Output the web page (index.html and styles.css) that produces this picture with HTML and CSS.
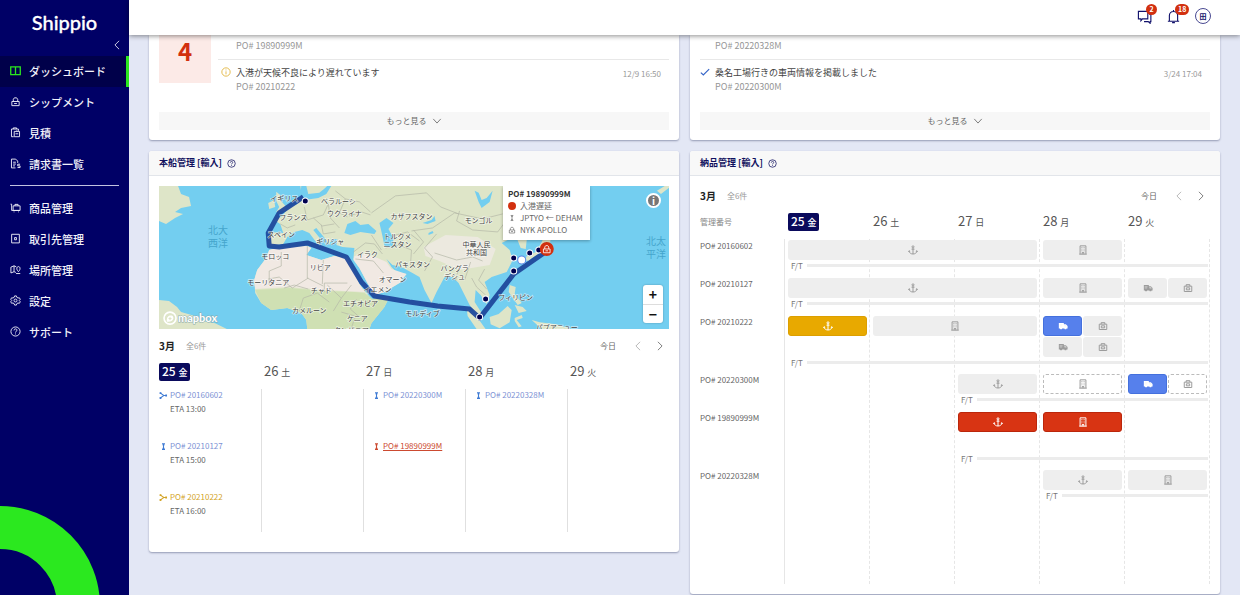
FILE: index.html
```html
<!DOCTYPE html>
<html lang="ja">
<head>
    <meta charset="UTF-8">
    <meta name="viewport" content="width=device-width, initial-scale=1.0">
    <title>Shippio - ダッシュボード</title>
    <link rel="stylesheet" href="styles.css">
</head>
<body>

    <!-- icon sprite -->
    <svg class="sprite" aria-hidden="true">
        <symbol id="i-board" viewBox="0 0 12 12"><path d="M.8 2h10.4v8.4H.8zM6 2v8.4"/></symbol>
        <symbol id="i-ship" viewBox="0 0 12 12"><path d="M2 6h8v4.500H2zM3.600 6V3.600L4.800 2h2.400l1.200 1.600V6M4.500 8.200h3"/></symbol>
        <symbol id="i-quote" viewBox="0 0 12 12"><path d="M4 10.6H1.6V2.2h7.6v2M3.6 2.2V1h3.6v1.2M4.6 4.8h5.8v5.8H4.6zM6 7.4h3M7.5 4.8V3.6"/></symbol>
        <symbol id="i-bill" viewBox="0 0 12 12"><path d="M6 10.8H1.6V1.2h4.6l2.2 2.2v2M3.4 4.6h3M3.4 6.6h3M3.4 8.6h2M11 6.8H8.4v1.8H11v1.8H8.2"/></symbol>
        <symbol id="i-goods" viewBox="0 0 12 12"><path d="M.6 2.4h1.2v6.8h8.8M3.4 4.2h7.6v5H3.4zM5.4 4.2V2.6h3.4v1.6M4 10.8h.8M9 10.8h.8"/></symbol>
        <symbol id="i-partner" viewBox="0 0 12 12"><path d="M1.8 1.4h8.4v9.4H1.8zM5 5h2v2.400H5z"/></symbol>
        <symbol id="i-place" viewBox="0 0 12 12"><path d="M6.4 9.2L4.4 8.4 1 9.8V3.4L4.4 2v6.4M4.4 2l2.4 1M9.2 8.4c-3-3-1.6-5.6 0-5.6s3 2.6 0 5.6zM6.6 10.4h4.6"/></symbol>
        <symbol id="i-gear" viewBox="0 0 12 12"><path d="M5 1h2l.4 1.5 1.4.8L10.2 3l1 1.7L10.100 6l1.100 1.400-1 1.700-1.500-.400-1.300.800L7 11H5l-.400-1.500-1.400-.800-1.400.400-1-1.700L1.900 6 .8 4.700l1-1.700 1.400.300 1.400-.800z"/><circle cx="6" cy="6" r="1.600"/></symbol>
        <symbol id="i-help" viewBox="0 0 12 12"><circle cx="6" cy="6" r="5"/><path d="M4.400 4.800c0-2.200 3.200-2.200 3.200-.2C7.600 5.800 6 5.800 6 7.200M6 8.200v1"/></symbol>
        <symbol id="i-info" viewBox="0 0 12 12"><circle cx="6" cy="6" r="5"/><path d="M6 5.200v3.600M6 3v1.100"/></symbol>
        <symbol id="i-check" viewBox="0 0 12 12"><path d="M1 6.800l3 2.800L11 2.600"/></symbol>
        <symbol id="i-left" viewBox="0 0 12 12"><path d="M8.500 1L3.500 6l5 5"/></symbol>
        <symbol id="i-right" viewBox="0 0 12 12"><path d="M3.500 1l5 5-5 5"/></symbol>
        <symbol id="i-down" viewBox="0 0 12 12"><path d="M1.500 3.500L6 8.500l4.500-5"/></symbol>
        <symbol id="i-chat" viewBox="0 0 16 16"><path d="M1.500 2.500h10v8H5.800l-1.600 2v-2H1.500zM13 5.500h1.800v8H14v1.800l-2-1.800H7.500"/></symbol>
        <symbol id="i-bell" viewBox="0 0 16 16"><path d="M2 13h12M3.600 13V7a4.400 4.400 0 0 1 8.800 0v6M6.500 14.500h3M8 2.500V1"/></symbol>
        <symbol id="i-direct" viewBox="0 0 12 12"><path d="M4 2.200h4M4 9.800h4M6 2v8M4.800 3.800h2.400M4.800 8.200h2.400"/></symbol>
        <symbol id="i-trans" viewBox="0 0 12 12"><path d="M1.500 2.500L6.500 6l-5 3.500M6 6h4"/><path class="solid" d="M.8 1.500h2.400v2.400H.8zM.8 8.100h2.400v2.400H.8zM8.300 4.800h2.400v2.400H8.300z"/></symbol>
        <symbol id="i-anchor" viewBox="0 0 12 12"><circle cx="6" cy="2.200" r="1.200"/><path d="M6 3.400v7.400M4.200 5h3.600M1.200 7.200c.4 2.400 2.400 3.600 4.800 3.600s4.400-1.200 4.800-3.600M.8 8.400l.5-1.600 1.300 1M11.200 8.400l-.5-1.600-1.300 1"/></symbol>
        <symbol id="i-building" viewBox="0 0 12 12"><path d="M2.500 11V1h7v10M1.500 11h9M5 11V9h2v2M4.200 3h1M6.800 3h1M4.200 5h1M6.800 5h1M4.200 7h1M6.800 7h1"/></symbol>
        <symbol id="i-truck" viewBox="0 0 12 12"><path class="solid" d="M1 2.500h6v1.500h2.400L11.500 6v3h-1.200a1.400 1.400 0 0 1-2.700 0H5a1.400 1.400 0 0 1-2.700 0H1z"/><path class="gap" d="M2 4.500h3.500M2 6h3M8 5.200h1.200l.9 1H8z"/></symbol>
        <symbol id="i-box" viewBox="0 0 12 12"><path d="M1.500 3.800h9v6.400h-9zM3.800 3.800V2h4.400v1.800M4 5.800h4v2.400H4z"/></symbol>
    </svg>

    <nav class="sidebar">
        <div class="brand">
            <a href="#" class="logo">Shippio</a>
            <button class="collapse" aria-label="メニューを閉じる"><svg class="icon"><use href="#i-left"/></svg></button>
        </div>
        <ul class="menu">
            <li><a href="#" class="active"><svg class="icon"><use href="#i-board"/></svg>ダッシュボード</a></li>
            <li><a href="#"><svg class="icon"><use href="#i-ship"/></svg>シップメント</a></li>
            <li><a href="#"><svg class="icon"><use href="#i-quote"/></svg>見積</a></li>
            <li><a href="#"><svg class="icon"><use href="#i-bill"/></svg>請求書一覧</a></li>
        </ul>
        <hr class="divider">
        <ul class="menu">
            <li><a href="#"><svg class="icon"><use href="#i-goods"/></svg>商品管理</a></li>
            <li><a href="#"><svg class="icon"><use href="#i-partner"/></svg>取引先管理</a></li>
            <li><a href="#"><svg class="icon"><use href="#i-place"/></svg>場所管理</a></li>
            <li><a href="#"><svg class="icon"><use href="#i-gear"/></svg>設定</a></li>
            <li><a href="#"><svg class="icon"><use href="#i-help"/></svg>サポート</a></li>
        </ul>
        <div class="ring"></div>
    </nav>

    <div class="page">
        <header class="topbar">
            <button class="top-btn" aria-label="メッセージ"><svg><use href="#i-chat"/></svg><span class="count">2</span></button>
            <button class="top-btn" aria-label="通知"><svg><use href="#i-bell"/></svg><span class="count">18</span></button>
            <button class="avatar">田</button>
        </header>

        <main class="board">
            <div class="column">
                <section class="card news">
                    <div class="news-body">
                        <div class="alert-count">4</div>
                        <ul class="news-list">
                            <li><p class="po">PO# 19890999M</p></li>
                            <li>
                                <svg class="icon warn"><use href="#i-info"/></svg>
                                <div class="news-text">
                                    <p class="title">入港が天候不良により遅れています</p>
                                    <p class="po">PO# 20210222</p>
                                </div>
                                <time>12/9 16:50</time>
                            </li>
                        </ul>
                    </div>
                    <button class="more">もっと見る <svg class="icon"><use href="#i-down"/></svg></button>
                </section>

                <section class="card">
                    <h2 class="card-title">本船管理 [輸入] <svg class="icon"><use href="#i-help"/></svg></h2>
                    <div class="card-body">
                        <div class="map">
                            <svg class="world" viewBox="0 0 509 143" preserveAspectRatio="xMidYMid slice">
                                <rect class="sea" width="509" height="143"/>
                                <g class="land">
                                    <path d="M0 0h19l3 8 8 3 2 9-10 2-6 4 8 2-8 4-9 6-7-3z"/>
                                    <path d="M0 114l10 1 8 6 4 5 14 4 8 5 12 2 12 6H0z"/>
                                    <path d="M117 6l4 3 1 6 5 6-1 4-9 1 3-5-3-6zM109 17l6-3 1 7-6 2z"/>
                                    <path d="M110 46L124 47 121 38 115 34 123 30 129 22 138 18 143 12 141 0 395 0 385 20 365 35 362 45 367 54 366 63 361 62 357 52 350 53 342 57 350 64 353 74 347 86 332 91 325 96 330 109 327 118 321 109 316 104 315 116 322 127 323 133 317 129 310 119 305 109 299 97 293 91 285 91 277 106 272 117 265 104 260 91 253 87 242 81 233 79 227 73 232 81 237 86 247 88 240 97 225 106 215 109 208 97 200 82 194 73 195 62 183 61 177 59 178 53 172 53 170 59 167 54 157 42 154 44 162 54 159 59 150 47 143 44 135 46 128 51 124 58 112 60 109 56z"/>
                                    <path d="M110 64L117 62 148 60 152 62 147 69 162 74 175 70 188 72 193 82 200 98 212 113 230 111 225 121 212 137 210 143 148 143 147 134 142 127 128 122 112 124 102 117 96 107 95 94 98 84 107 72z"/>
                                    <path d="M389 40l3 8-2 10-8 8-11 7-5 2 2-5 8-4 6-10zM367 70l4 1-1 5-4-3zM350 91l4-5 2 2-4 5z"/>
                                    <path d="M350 99l6 2-1 7 7 9-4 2-9-13zM355 119l8 2 4 4-8 2z"/>
                                    <path d="M330 131l9-3 9-8 4 4-2 12-10 6-9-4zM307 122l9 7 10 14h-9l-9-13zM355 132l7-3 1 3-6 2 5 6-3 1-4-6z"/>
                                    <path d="M372 134l8 2 16 2 16 5h-30zM497 5l8-5h4v2l-8 6z"/>
                                </g>
                                <path class="green" d="M96 104l34-2 35 3 30 1 10 1 8 6 17-2-5 10-13 16-2 6h-62l-1-9-5-7-14-5-16 2-10-7z"/>
                                <path class="desert" d="M110 64L117 62 148 60 152 62 147 69 162 74 175 70 188 72 193 82 200 98 205 106 165 104 130 101 96 103 95 94 98 84 107 72z"/>
                                <path class="desert" d="M195 70L205 68 218 72 227 76 232 83 247 88 240 97 225 106 215 109 208 97 200 82 194 74z"/>
                                <path class="plateau" d="M264 61l22-12 32 2 18 12-6 16-30 5-20-9-14-5z"/>
                                <g class="inland">
                                    <path d="M185 47l3-9 8-3 5 4 8-1 8 7-2 3-14-2-10 3z"/>
                                    <path d="M220 37l7-5 7 5-5 6 5 9-1 10-8-2-2-10z"/>
                                    <path d="M315 5l4 2 3 7 5-2 6-7-3 11-8 6-3-6z"/>
                                    <path d="M142 0l5 0 2 8 11-1 5-4 3-3 4 0-5 8-8 4-14 2-4-3z"/>
                                    <path d="M263 37l9-3 3-4 1 5-8 3zM269 47l4-2 1 2-5 2z"/>
                                </g>
                                <g class="border">
                                    <path d="M148 60v32l16 8M164 74l-1 24M188 97h-23v9M149 92l-16 10-13-11-11 2M122 66v14l-12 5v14M125 102l10-3 14 4M168 99l14 13-8 13M182 112l10-13M140 125l4-13 14-5 12 9M182 126l14 4-4 12M197 113l-6 10 8 7"/>
                                    <path d="M121 38l7 4 8-3M145 21l3 13 16-5 5-11M169 18l2 14 9 10M154 32l9 8 12-2M162 39l2 9 12-2M176 5l10 8 14 3 11 10M186 13l-6 14 8 4M190 30l12-4 9 3M194 66l12-9 9 1 8 10M212 49l10 15M226 62l13-3 13 5-1 15M233 50l15-4 12 9M196 73l18 2 10 12"/>
                                    <path d="M212 27l24-17 31-3 14 14 18 7M252 45l21-3 22-15 28 6 20-5M300 25l-3 10 16 9 25 2 6-8M277 48l-12 14 8 9-8 14M275 67l22 7 16-3 10 4M299 82l-3 13M311 76l-6 18M312 92l5 9 9 8M325 83l-6 11 8 9M254 44l10 12-10 12"/>
                                </g>
                                <g class="ocean-name">
                                    <text x="59" y="48">北大</text><text x="59" y="61">西洋</text>
                                    <text x="496" y="59">北太</text><text x="496" y="72">平洋</text>
                                </g>
                                <path class="route" d="M144 11l-24 16-11 20 1 13 10 1 28-4 39 14 15 25 13 14 35 6 28 4 32 3 10 9 34-44 33-23"/>
                                <g class="place">
                                    <text x="125" y="15">イギリス</text><text x="179" y="18">ベラルーシ</text>
                                    <text x="134" y="34">フランス</text><text x="185" y="30">ウクライナ</text>
                                    <text x="122" y="51">スペイン</text><text x="171" y="58">ギリシャ</text>
                                    <text x="116" y="73">モロッコ</text><text x="208" y="71">イラク</text>
                                    <text x="161" y="84">リビア</text><text x="109" y="99">モーリタニア</text>
                                    <text x="162" y="107">チャド</text><text x="233" y="96">オマーン</text>
                                    <text x="218" y="106">イエメン</text><text x="201" y="120">エチオピア</text>
                                    <text x="150" y="127">カメルーン</text><text x="198" y="135">ケニア</text>
                                    <text x="192" y="147">タンザニア</text><text x="252" y="33">カザフスタン</text>
                                    <text x="238" y="53">トルクメ</text><text x="238" y="61">ニスタン</text>
                                    <text x="253" y="81">パキスタン</text><text x="319" y="37">モンゴル</text>
                                    <text x="317" y="61">中華人民</text><text x="317" y="69">共和国</text>
                                    <text x="295" y="85">バングラ</text><text x="295" y="93">デシュ</text>
                                    <text x="263" y="130">モルディブ</text><text x="356" y="114">フィリピン</text>
                                    <text x="397" y="144">パプアニュー</text>
                                </g>
                                <g class="port">
                                    <circle cx="146" cy="15" r="3"/><circle cx="354" cy="72" r="3"/>
                                    <circle cx="370" cy="67" r="3"/><circle cx="379" cy="64" r="3"/>
                                    <circle cx="354" cy="85" r="3"/><circle cx="326" cy="113" r="3"/>
                                    <circle cx="320" cy="131" r="3"/>
                                </g>
                                <circle class="vessel" cx="362" cy="74" r="4"/>
                                <circle class="late" cx="387" cy="63" r="7"/>
                                <use class="late-ship" href="#i-ship" x="382" y="58" width="10" height="10"/>
                                <g class="mapbox">
                                    <circle cx="11" cy="132" r="6"/><path d="M8 135.500c-1-4 1.500-7 5-6 3 2 1 7-5 6zM11 130.500l.7 1.300 1.300.7-1.300.7-.7 1.300-.7-1.300-1.300-.7 1.300-.7z"/>
                                    <text x="19" y="136">mapbox</text>
                                </g>
                            </svg>
                            <div class="popup">
                                <strong>PO# 19890999M</strong>
                                <span><i class="dot"></i>入港遅延</span>
                                <span><svg class="icon"><use href="#i-direct"/></svg>JPTYO ← DEHAM</span>
                                <span><svg class="icon"><use href="#i-ship"/></svg>NYK APOLLO</span>
                            </div>
                            <button class="map-info" aria-label="地図情報">i</button>
                            <div class="zoom">
                                <button aria-label="拡大">+</button>
                                <button aria-label="縮小">−</button>
                            </div>
                        </div>

                        <div class="month">
                            <b>3月</b><small>全6件</small>
                            <button class="today">今日</button>
                            <button class="prev" aria-label="前へ"><svg class="icon"><use href="#i-left"/></svg></button>
                            <button class="next" aria-label="次へ"><svg class="icon"><use href="#i-right"/></svg></button>
                        </div>

                        <div class="week vessel-week">
                            <div class="day"><span class="current">25 <small>金</small></span></div>
                            <div class="day"><span>26 <small>土</small></span></div>
                            <div class="day"><span>27 <small>日</small></span></div>
                            <div class="day"><span>28 <small>月</small></span></div>
                            <div class="day"><span>29 <small>火</small></span></div>
                        </div>
                        <div class="week vessels">
                            <div class="lane">
                                <div class="ship"><a href="#"><svg class="icon"><use href="#i-trans"/></svg>PO# 20160602</a><p>ETA 13:00</p></div>
                                <div class="ship"><a href="#"><svg class="icon"><use href="#i-direct"/></svg>PO# 20210127</a><p>ETA 15:00</p></div>
                                <div class="ship yellow"><a href="#"><svg class="icon"><use href="#i-trans"/></svg>PO# 20210222</a><p>ETA 16:00</p></div>
                            </div>
                            <div class="lane"></div>
                            <div class="lane">
                                <div class="ship"><a href="#"><svg class="icon"><use href="#i-direct"/></svg>PO# 20220300M</a></div>
                                <div class="ship red"><a href="#"><svg class="icon"><use href="#i-direct"/></svg><u>PO# 19890999M</u></a></div>
                            </div>
                            <div class="lane">
                                <div class="ship"><a href="#"><svg class="icon"><use href="#i-direct"/></svg>PO# 20220328M</a></div>
                            </div>
                            <div class="lane"></div>
                        </div>
                    </div>
                </section>
            </div>

            <div class="column">
                <section class="card news">
                    <div class="news-body">
                        <ul class="news-list">
                            <li><p class="po">PO# 20220328M</p></li>
                            <li>
                                <svg class="icon done"><use href="#i-check"/></svg>
                                <div class="news-text">
                                    <p class="title">桑名工場行きの車両情報を掲載しました</p>
                                    <p class="po">PO# 20220300M</p>
                                </div>
                                <time>3/24 17:04</time>
                            </li>
                        </ul>
                    </div>
                    <button class="more">もっと見る <svg class="icon"><use href="#i-down"/></svg></button>
                </section>

                <section class="card">
                    <h2 class="card-title">納品管理 [輸入] <svg class="icon"><use href="#i-help"/></svg></h2>
                    <div class="card-body">
                        <div class="month">
                            <b>3月</b><small>全6件</small>
                            <button class="today">今日</button>
                            <button class="prev" aria-label="前へ"><svg class="icon"><use href="#i-left"/></svg></button>
                            <button class="next" aria-label="次へ"><svg class="icon"><use href="#i-right"/></svg></button>
                        </div>

                        <div class="plan-grid plan-head">
                            <div class="plan-label">管理番号</div>
                            <div class="day"><span class="current">25 <small>金</small></span></div>
                            <div class="day"><span>26 <small>土</small></span></div>
                            <div class="day"><span>27 <small>日</small></span></div>
                            <div class="day"><span>28 <small>月</small></span></div>
                            <div class="day"><span>29 <small>火</small></span></div>
                        </div>

                        <div class="plan">
                            <div class="plan-grid lines"><i></i><i></i><i></i><i></i><i></i><i></i></div>
                            <div class="rows">
                                <div class="plan-grid row">
                                    <span class="plan-po">PO# 20160602</span>
                                    <div class="bar from1 span3"><svg class="icon"><use href="#i-anchor"/></svg></div>
                                    <div class="bar from4"><svg class="icon"><use href="#i-building"/></svg></div>
                                    <div class="free from1">F/T</div>
                                </div>
                                <div class="plan-grid row">
                                    <span class="plan-po">PO# 20210127</span>
                                    <div class="bar from1 span3"><svg class="icon"><use href="#i-anchor"/></svg></div>
                                    <div class="bar from4"><svg class="icon"><use href="#i-building"/></svg></div>
                                    <div class="halves from5">
                                        <div class="bar"><svg class="icon"><use href="#i-truck"/></svg></div>
                                        <div class="bar"><svg class="icon"><use href="#i-box"/></svg></div>
                                    </div>
                                    <div class="free from1">F/T</div>
                                </div>
                                <div class="plan-grid row tall">
                                    <span class="plan-po">PO# 20210222</span>
                                    <div class="bar amber from1"><svg class="icon"><use href="#i-anchor"/></svg></div>
                                    <div class="bar from2 span2"><svg class="icon"><use href="#i-building"/></svg></div>
                                    <div class="halves from4">
                                        <div class="bar blue"><svg class="icon"><use href="#i-truck"/></svg></div>
                                        <div class="bar"><svg class="icon"><use href="#i-box"/></svg></div>
                                        <div class="bar"><svg class="icon"><use href="#i-truck"/></svg></div>
                                        <div class="bar"><svg class="icon"><use href="#i-box"/></svg></div>
                                    </div>
                                    <div class="free from1">F/T</div>
                                </div>
                                <div class="plan-grid row">
                                    <span class="plan-po">PO# 20220300M</span>
                                    <div class="bar from3"><svg class="icon"><use href="#i-anchor"/></svg></div>
                                    <div class="bar outline from4"><svg class="icon"><use href="#i-building"/></svg></div>
                                    <div class="halves from5">
                                        <div class="bar blue"><svg class="icon"><use href="#i-truck"/></svg></div>
                                        <div class="bar outline"><svg class="icon"><use href="#i-box"/></svg></div>
                                    </div>
                                    <div class="free from3">F/T</div>
                                </div>
                                <div class="plan-grid row tall">
                                    <span class="plan-po">PO# 19890999M</span>
                                    <div class="bar danger from3"><svg class="icon"><use href="#i-anchor"/></svg></div>
                                    <div class="bar danger from4"><svg class="icon"><use href="#i-building"/></svg></div>
                                    <div class="free from3">F/T</div>
                                </div>
                                <div class="plan-grid row">
                                    <span class="plan-po">PO# 20220328M</span>
                                    <div class="bar from4"><svg class="icon"><use href="#i-anchor"/></svg></div>
                                    <div class="bar from5"><svg class="icon"><use href="#i-building"/></svg></div>
                                    <div class="free from4">F/T</div>
                                </div>
                            </div>
                        </div>
                    </div>
                </section>
            </div>
        </main>
    </div>

</body>
</html>
```

FILE: styles.css
```css
* {
    box-sizing: border-box;
}

body {
    display: flex;
    margin: 0;
    height: 100vh;
    overflow: hidden;
    font-family: "Noto Sans CJK JP", "Noto Sans", sans-serif;
    font-size: 8px;
    line-height: 12px;
    color: #666;
    background: #e3e7f5;
}

p, h2, ul {
    margin: 0;
    padding: 0;
    list-style: none;
}

a {
    color: inherit;
    text-decoration: none;
}

button {
    padding: 0;
    border: none;
    background: none;
    font: inherit;
    color: inherit;
    cursor: pointer;
}

.sprite {
    position: absolute;
    width: 0;
    height: 0;
}

.icon {
    flex: none;
    width: 10px;
    height: 10px;
}

svg {
    fill: none;
    stroke: currentColor;
    stroke-width: 1;
}

.solid {
    fill: currentColor;
    stroke: none;
}

.gap {
    stroke: #eee;
    stroke-width: 0.6;
}

/* sidebar */
.sidebar {
    position: relative;
    flex: none;
    width: 129px;
    overflow: hidden;
    background: #000066;
    color: #f2f2fa;
}

.brand {
    display: flex;
    flex-direction: column;
    align-items: center;
    height: 56px;
    padding-top: 9px;
}

.logo {
    font-family: Lato, sans-serif;
    font-size: 20px;
    font-weight: 500;
    line-height: 26px;
    color: #fff;
    -webkit-text-stroke: 0.3px #fff;
}

.collapse {
    display: flex;
    align-self: flex-end;
    margin: 5px 7px 0 0;
}

.menu a {
    display: flex;
    align-items: center;
    gap: 8px;
    height: 31px;
    padding: 0 0 2px 10px;
    border-right: 3px solid transparent;
    font-size: 11px;
    font-weight: 500;
}

.menu .icon {
    width: 11px;
    height: 11px;
}

.menu .active {
    background: #00004a;
    border-color: #2be81f;
}

.active .icon {
    color: #2be81f;
    stroke-width: 1.4;
}

.divider {
    height: 1px;
    margin: 5px 10px 7px;
    border: none;
    background: #c3c3e0;
}

.ring {
    position: absolute;
    left: -100px;
    bottom: -111px;
    width: 200px;
    height: 200px;
    border: 43px solid #2be81f;
    border-radius: 50%;
}

/* top bar */
.page {
    display: flex;
    flex-direction: column;
    flex: 1;
    min-width: 0;
}

.topbar {
    display: flex;
    flex: none;
    justify-content: flex-end;
    align-items: center;
    gap: 14px;
    height: 35px;
    padding: 0 29px 3px 0;
    background: #fff;
    box-shadow: 0 1px 5px rgba(0, 0, 0, 0.45);
    color: #11116b;
    z-index: 1;
}

.top-btn {
    position: relative;
    width: 15px;
    height: 15px;
}

.top-btn svg {
    width: 15px;
    height: 15px;
    stroke-width: 1.2;
}

.count {
    position: absolute;
    top: -5px;
    left: 9px;
    min-width: 11px;
    padding: 0 3px;
    border-radius: 6px;
    background: #d2300f;
    color: #fff;
    font-size: 7px;
    font-weight: 700;
    line-height: 11px;
}

.avatar {
    width: 16px;
    height: 16px;
    border: 1px solid #4a4a92;
    border-radius: 50%;
    font-weight: 700;
    font-size: 7px;
    line-height: 14px;
}

/* cards */
.board {
    display: grid;
    grid-template-columns: 1fr 1fr;
    align-items: start;
    gap: 11px;
    padding: 0 20px;
}

.card {
    overflow: hidden;
    margin-bottom: 11px;
    border-radius: 3px;
    background: #fff;
    box-shadow: 0 1px 2px rgba(50, 60, 100, 0.45);
}

.news {
    height: 105px;
    padding: 0 10px;
    border-radius: 0 0 3px 3px;
}

.news-body {
    display: flex;
    gap: 7px;
    height: 77px;
}

.alert-count {
    width: 52px;
    height: 48px;
    background: #fceae7;
    color: #d2300f;
    font-size: 24px;
    font-weight: 700;
    line-height: 32px;
    text-align: center;
}

.news-list {
    flex: 1;
}

.news-list li {
    display: flex;
    align-items: flex-start;
    gap: 5px;
    padding: 6px 8px 0 3px;
}

.news-list li:first-child {
    height: 25px;
    padding: 3px 0 0 18px;
    border-bottom: 1px solid #e8e8e8;
}

.news:has(.done) .news-list li {
    padding-left: 0;
}

.news:has(.done) .news-list li:first-child {
    padding-left: 15px;
}

.news-text {
    flex: 1;
}

.news .title {
    font-size: 9px;
    line-height: 13px;
    color: #444;
}

.news .po {
    font-size: 9px;
    line-height: 16px;
    color: #969696;
}

.news-list .icon {
    margin-top: 1px;
}

.warn {
    color: #e0b030;
}

.done {
    color: #3565c8;
    stroke-width: 1.4;
}

time {
    padding-top: 2px;
    color: #999;
}

.more {
    display: flex;
    justify-content: center;
    align-items: center;
    gap: 5px;
    width: 100%;
    height: 18px;
    background: #f7f7f7;
}

.card-title {
    display: flex;
    align-items: center;
    gap: 5px;
    height: 25px;
    padding: 0 10px;
    border-bottom: 1px solid #e2e5ea;
    background: #f8f8f8;
    color: #11115e;
    font-size: 9px;
    font-weight: 700;
}

.card-title .icon {
    width: 9px;
    height: 9px;
}

.card-body {
    padding: 10px;
}

/* map */
.map {
    position: relative;
    height: 143px;
    margin-bottom: 7px;
    overflow: hidden;
}

.world {
    display: block;
    width: 100%;
    height: 100%;
    stroke: none;
}

.sea,
.inland {
    fill: #73cef0;
}

.land {
    fill: #dee5c8;
}

.green {
    fill: #cfe0b3;
}

.desert {
    fill: #f1e9e3;
}

.plateau {
    fill: #ece9df;
}

.border {
    fill: none;
    stroke: #b5b8a8;
    stroke-width: 0.7;
}

.place {
    fill: #444;
    stroke: #fff;
    stroke-width: 1.5;
    stroke-opacity: 0.6;
    paint-order: stroke;
    font-size: 7px;
    text-anchor: middle;
}

.ocean-name {
    fill: #45a5cc;
    font-size: 10px;
    text-anchor: middle;
}

.route {
    fill: none;
    stroke: #1d459a;
    stroke-opacity: 0.93;
    stroke-width: 5;
    stroke-linejoin: round;
}

.port {
    fill: #00004f;
    stroke: #fff;
}

.vessel {
    fill: #fff;
    stroke: #5b86e6;
}

.late {
    fill: #d2300f;
}

.late-ship {
    stroke: #fff;
}

.mapbox circle {
    fill: none;
    stroke: #fff;
    stroke-width: 1.6;
}

.mapbox path {
    fill: #fff;
    fill-rule: evenodd;
}

.mapbox text {
    fill: #fff;
    stroke: #8aa;
    stroke-width: 1;
    paint-order: stroke;
    font-family: Lato, sans-serif;
    font-size: 11px;
    font-weight: 700;
}

.popup {
    position: absolute;
    top: 0;
    left: 344px;
    display: flex;
    flex-direction: column;
    width: 87px;
    padding: 2px 5px 4px;
    background: #fff;
    box-shadow: 0 1px 3px rgba(0, 0, 0, 0.3);
}

.popup strong {
    color: #333;
}

.popup span {
    display: flex;
    align-items: center;
    gap: 4px;
    white-space: nowrap;
}

.popup .icon,
.popup .dot {
    width: 8px;
    height: 8px;
}

.dot {
    border-radius: 50%;
    background: #d2300f;
}

.map-info {
    position: absolute;
    top: 7px;
    right: 8px;
    width: 15px;
    height: 15px;
    border: 2px solid #fff;
    border-radius: 50%;
    background: #777;
    color: #fff;
    font-size: 10px;
    font-weight: 700;
    line-height: 11px;
}

.zoom {
    position: absolute;
    right: 6px;
    bottom: 6px;
    display: flex;
    flex-direction: column;
    width: 20px;
    border-radius: 3px;
    background: #fff;
    box-shadow: 0 0 2px rgba(0, 0, 0, 0.3);
    color: #111;
    font-size: 14px;
    font-weight: 700;
}

.zoom button {
    height: 19px;
    line-height: 19px;
}

.zoom button + button {
    border-top: 1px solid #ddd;
}

/* calendar heading */
.month {
    display: flex;
    align-items: center;
    height: 20px;
    padding-right: 4px;
}

.month b {
    color: #222;
    font-size: 10px;
}

.month small {
    margin-left: 11px;
    color: #999;
    font-size: 8px;
}

.today {
    margin-left: auto;
}

.prev,
.next {
    display: flex;
    margin-left: 12px;
}

.prev {
    margin-left: 17px;
    color: #aaa;
}

.week {
    display: grid;
    grid-template-columns: repeat(5, 1fr);
}

.vessel-week {
    height: 33px;
    padding-top: 7px;
}

.day {
    padding-left: 3px;
    font-size: 13px;
    line-height: 16px;
    color: #555;
    white-space: nowrap;
}

.day small {
    font-size: 9px;
}

.day .current {
    display: inline-block;
    padding: 0 3px;
    border-radius: 2px;
    background: #0a0a5c;
    color: #fff;
    font-size: 12px;
    font-weight: 500;
}

.vessel-week .day:first-child {
    padding-left: 0;
}

/* vessel calendar */
.vessels {
    margin-bottom: 10px;
}

.lane {
    height: 143px;
    padding-left: 8px;
    border-left: 1px solid #e0e0e0;
}

.lane:first-child {
    padding-left: 0;
    border-left: none;
}

.ship {
    height: 51px;
}

.ship a {
    display: flex;
    align-items: center;
    gap: 2px;
    color: #7c92d4;
}

.ship .icon {
    width: 9px;
    height: 9px;
    color: #3f7bd4;
    stroke-width: 1.4;
}

.ship p {
    padding: 2px 0 0 11px;
}

.ship.yellow a,
.ship.yellow .icon {
    color: #d3a427;
}

.ship.red a,
.ship.red .icon {
    color: #cc4a30;
}

/* delivery plan */
.plan-grid {
    display: grid;
    grid-template-columns: 85px repeat(5, 1fr);
}

.plan-head {
    height: 33px;
    padding-top: 7px;
}

.plan-label {
    color: #888;
    line-height: 18px;
}

.plan {
    display: grid;
    min-height: 345px;
}

.lines,
.rows {
    grid-area: 1 / 1;
}

.lines i {
    border-right: 1px dashed #e6e6e6;
}

.lines i:first-child {
    border-right-style: solid;
}

.rows {
    padding-top: 1px;
}

.row {
    grid-template-rows: 20px 11px;
    height: 38px;
}

.row.tall {
    grid-template-rows: 41px 11px;
    height: 58px;
}

.plan-po {
    grid-area: 1 / 1;
}

.bar {
    display: flex;
    justify-content: center;
    align-items: center;
    grid-row: 1;
    height: 20px;
    margin: 0 3px;
    border-radius: 3px;
    background: #eee;
    color: #9c9c9c;
}

.bar .icon {
    stroke-width: 1.2;
}

.amber {
    background: #e8a900;
    border: 1px solid #dc9f00;
    color: #fff;
}

.blue {
    background: #5680ec;
    border: 1px solid #4470dd;
    color: #fff;
}

.danger {
    background: #d83413;
    border: 1px solid #bb260b;
    color: #fff;
}

.outline {
    border: 1px dashed #bbb;
    background: #fff;
}

.halves {
    display: grid;
    grid-template-columns: 1fr 1fr;
    grid-row: 1;
    align-content: start;
    gap: 1px;
    margin: 0 3px;
}

.halves .bar {
    grid-row: auto;
    margin: 0;
}

.free {
    display: flex;
    align-items: center;
    gap: 4px;
    grid-row: 2;
    padding: 0 2px 0 6px;
    color: #777;
}

.free::after {
    content: "";
    flex: 1;
    height: 3px;
    background: #ececec;
}

.from1 { grid-column: 2 / span 1; }
.from2 { grid-column: 3 / span 1; }
.from3 { grid-column: 4 / span 1; }
.from4 { grid-column: 5 / span 1; }
.from5 { grid-column: 6 / span 1; }

.span2 { grid-column-end: span 2; }
.span3 { grid-column-end: span 3; }

.free { grid-column-end: -1; }
```
